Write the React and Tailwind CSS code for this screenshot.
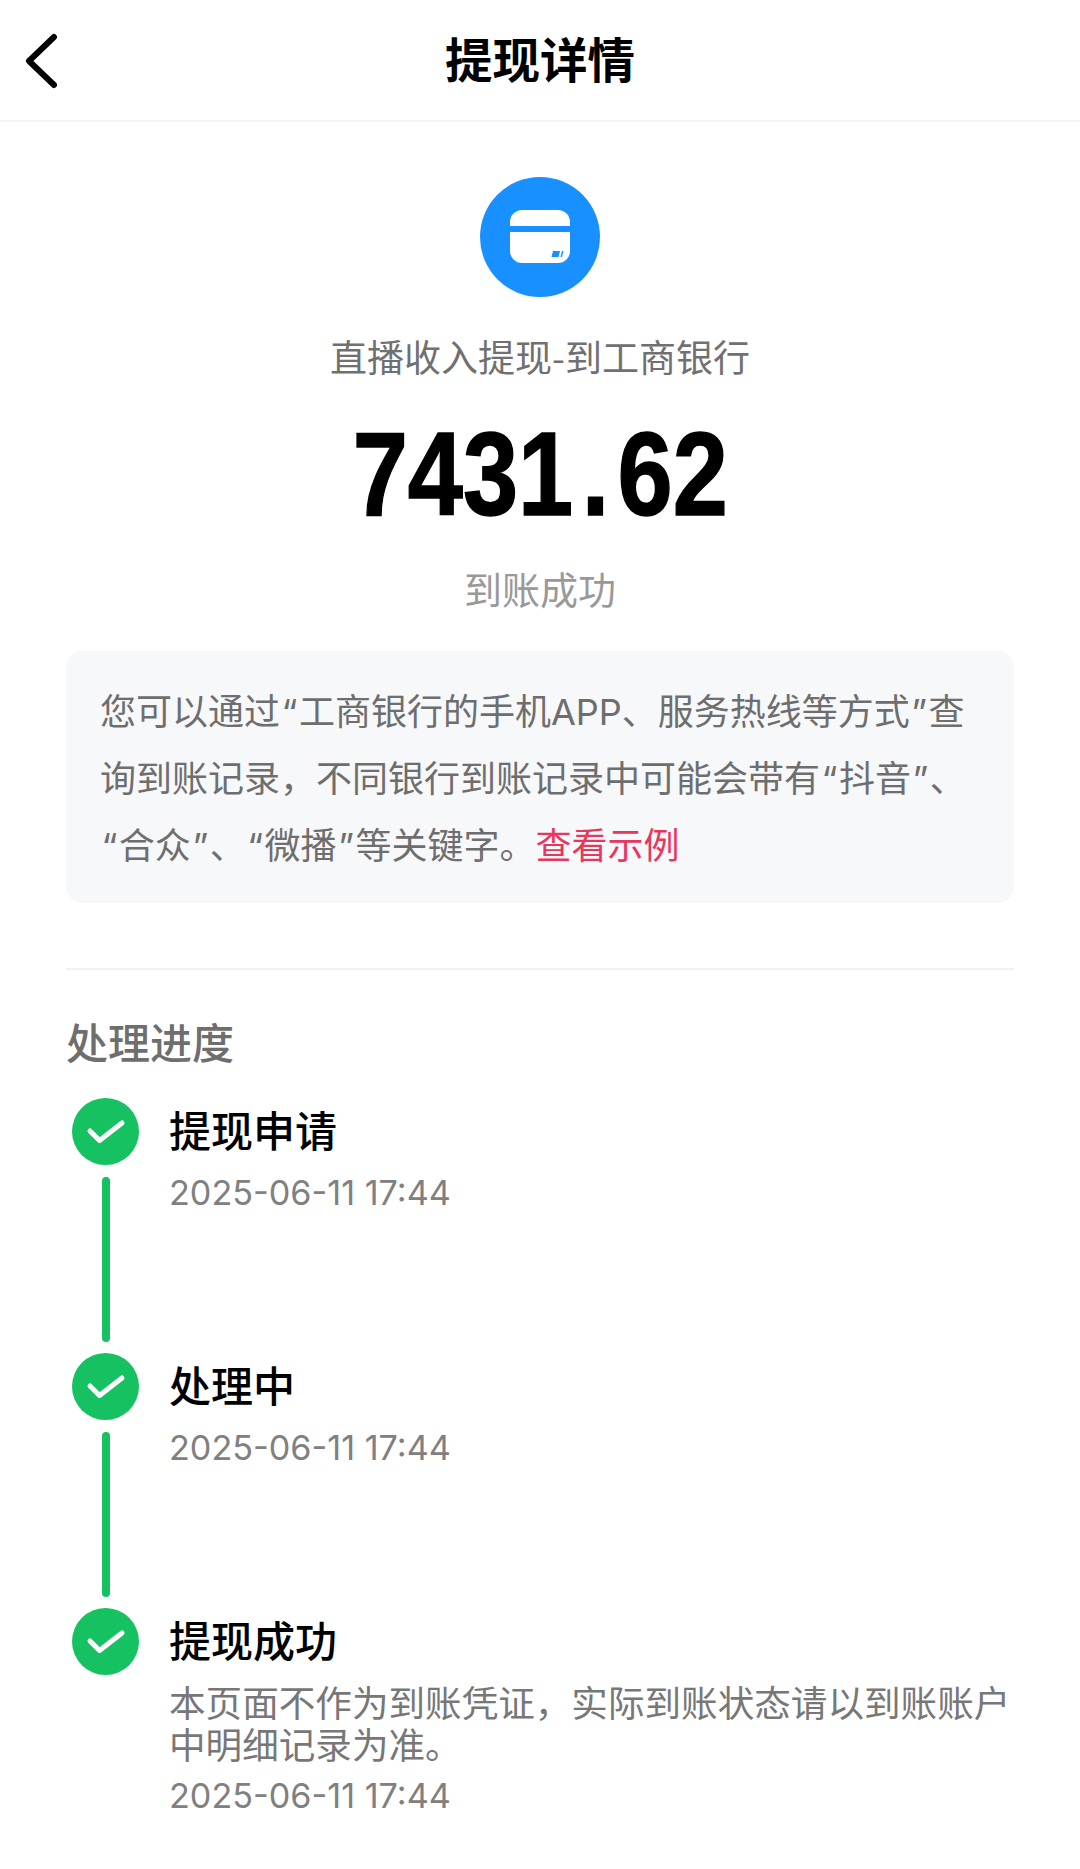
const cjk = { fontFamily: '"Noto Sans CJK SC", sans-serif' }

function CheckDot() {
  return (
    <div className="w-[67px] h-[67px] rounded-full bg-[#15c160] flex items-center justify-center shrink-0">
      <svg width="40" height="30" viewBox="0 0 40 30" fill="none">
        <path d="M4 14 L13.5 23.5 L36 6" stroke="#fff" strokeWidth="5" strokeLinecap="round" strokeLinejoin="round" />
      </svg>
    </div>
  )
}

function DateText({ children }) {
  return <div className="font-['Inter'] text-[34.2px] leading-[40px] text-[#808080]">{children}</div>
}

// the quotes sit a little looser than Inter's own
function Q({ children }) {
  return <span className="mx-[1.5px]">{children}</span>
}

function Step({ title, note, date, last }) {
  return (
    <div className={last ? 'flex' : 'flex h-[255px]'}>
      <div className="w-[67px] ml-[6px] mr-[30px] flex flex-col items-center shrink-0">
        <CheckDot />
        {!last && <div className="w-2 h-[165px] mt-3 rounded-full bg-[#15c160]" />}
      </div>
      <div className="flex-1 min-w-0">
        <div className="text-[42px] leading-[62px] font-medium text-black">{title}</div>
        {note ? (
          <div className="text-[36.6px] leading-[42px] text-[#777777] mt-[11px] mb-[11px] whitespace-nowrap">
            <div>本页面不作为到账凭证，实际到账状态请以到账账户</div>
            <div>中明细记录为准。</div>
          </div>
        ) : (
          <div className="mt-[13px]" />
        )}
        <DateText>{date}</DateText>
      </div>
    </div>
  )
}

export default function App() {
  return (
    <div className="w-[1080px] h-[1869px] bg-white overflow-hidden" style={cjk}>
      {/* header */}
      <div className="relative h-[122px] flex items-center justify-center border-b-2 border-[#f5f5f5]">
        <svg className="absolute left-[23px] top-[33px]" width="36" height="56" viewBox="0 0 36 56" fill="none">
          <path d="M31 4 L6 28 L31 52" stroke="#000" strokeWidth="6" strokeLinecap="round" strokeLinejoin="round" />
        </svg>
        <div className="text-[47.5px] leading-none font-bold text-black pb-[4px]">提现详情</div>
      </div>

      {/* amount */}
      <div className="flex flex-col items-center">
        <div className="mt-[55px] w-[120px] h-[120px] rounded-full bg-[#1890ff] flex items-center justify-center">
          <svg width="60" height="54" viewBox="0 0 60 54" fill="none">
            <path d="M0 16 V12 A12 12 0 0 1 12 0 H48 A12 12 0 0 1 60 12 V16 Z" fill="#fff" />
            <path d="M0 22 H60 V41 A12 12 0 0 1 48 53 H12 A12 12 0 0 1 0 41 Z" fill="#fff" />
            <path d="M43 41 H50 L48.5 47 H41.5 Z M52 41 H53.5 L52 47 H50.5 Z" fill="#1890ff" />
          </svg>
        </div>
        <div className="mt-[33px] text-[37px] leading-[52px] text-[#707070]">直播收入提现-到工商银行</div>
        <div className="mt-[32px] font-['Liberation_Sans'] font-bold text-[118px] leading-[120px] text-black scale-x-[.84] [-webkit-text-stroke:1.5px_black]">7431<span className="mx-[10px]">.</span>62</div>
        <div className="mt-[26px] text-[38px] leading-[56px] text-[#999999]">到账成功</div>
      </div>

      {/* notice */}
      <div className="mx-[66px] mt-[35px] h-[252px] rounded-[16px] bg-[#f7f8fa] px-[34px] pt-[28px] font-['Inter','Noto_Sans_CJK_SC',sans-serif] text-[36px] leading-[67px] text-[#6e6e6e] whitespace-nowrap">
        <div>您可以通过<Q>“</Q>工商银行的手机APP、服务热线等方式<Q>”</Q>查</div>
        <div>询到账记录，不同银行到账记录中可能会带有<Q>“</Q>抖音<Q>”</Q>、</div>
        <div><Q>“</Q>合众<Q>”</Q>、<Q>“</Q>微播<Q>”</Q>等关键字。<span className="text-[#e8375c]">查看示例</span></div>
      </div>

      <div className="mx-[66px] mt-[65px] h-[2px] bg-[#f2f2f2]" />

      {/* progress */}
      <div className="mx-[66px] mt-[41px]">
        <div className="text-[42px] leading-[60px] font-medium text-[#6e6e6e]">处理进度</div>
        <div className="mt-[27px]">
          <Step title="提现申请" date="2025-06-11 17:44" />
          <Step title="处理中" date="2025-06-11 17:44" />
          <Step title="提现成功" note date="2025-06-11 17:44" last />
        </div>
      </div>
    </div>
  )
}
